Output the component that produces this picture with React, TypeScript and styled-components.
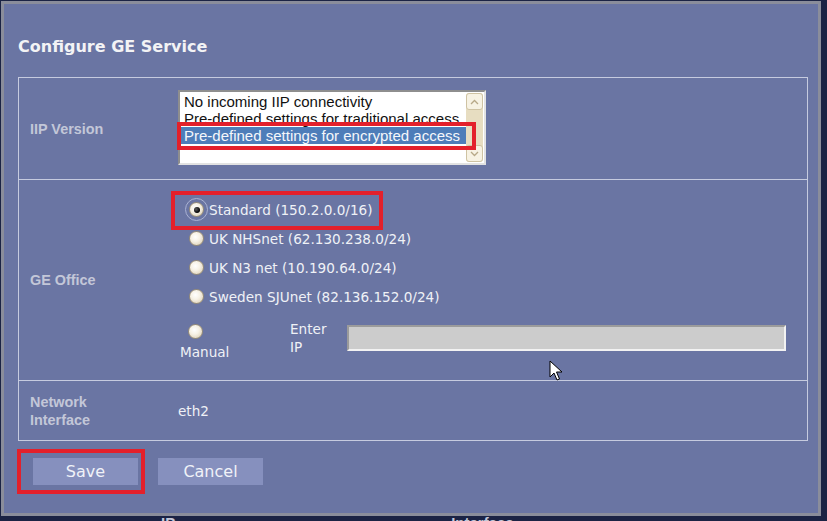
import React from "react";
import styled, { createGlobalStyle } from "styled-components";

const GlobalStyle = createGlobalStyle`
  html, body {
    margin: 0;
    padding: 0;
    background: #1b2344;
  }
  body {
    width: 827px;
    height: 521px;
    overflow: hidden;
    font-family: "DejaVu Sans", "Liberation Sans", sans-serif;
  }
`;

const Page = styled.div`
  width: 827px;
  height: 521px;
  box-sizing: border-box;
  padding: 1px 0 0 1px;
  background: #1b2344;
  overflow: hidden;
`;

const Dialog = styled.div`
  width: 820px;
  height: 515px;
  box-sizing: border-box;
  border: 3px solid #8a8d9b;
  background: #6a75a3;
  padding: 33px 10px 0 14px;
  display: flex;
  flex-direction: column;
`;

const Title = styled.h1`
  margin: 0 0 20px;
  font-family: "DejaVu Sans", sans-serif;
  font-weight: bold;
  font-size: 16px;
  line-height: 20px;
  color: #f3f3f5;
`;

const Table = styled.div`
  border: 1px solid #c6cbdf;
  display: flex;
  flex-direction: column;
`;

const Row = styled.div<{ $h: number; $last?: boolean }>`
  display: grid;
  grid-template-columns: 159px 1fr;
  height: ${(p) => p.$h}px;
  border-bottom: ${(p) => (p.$last ? "none" : "1px solid #c6cbdf")};
`;

const Label = styled.div`
  align-self: center;
  padding-left: 11px;
  font-family: "Liberation Sans", Arial, sans-serif;
  font-weight: bold;
  font-size: 14.4px;
  line-height: 18px;
  color: #c3c7d8;
`;

const Cell = styled.div<{ $pt?: number; $center?: boolean }>`
  padding-top: ${(p) => p.$pt ?? 0}px;
  display: flex;
  flex-direction: column;
  justify-content: ${(p) => (p.$center ? "center" : "flex-start")};
`;

const ListWrap = styled.div`
  position: relative;
  width: 308px;
  height: 75px;
`;

const ListBox = styled.div`
  width: 100%;
  height: 100%;
  box-sizing: border-box;
  border: 2px solid;
  border-color: #8e8e8e #e2e2e2 #e2e2e2 #8e8e8e;
  background: #ffffff;
  display: flex;
`;

const Options = styled.div`
  flex: 1;
  overflow: hidden;
  padding-top: 1px;
`;

const Option = styled.div<{ $selected?: boolean }>`
  height: 17px;
  line-height: 17px;
  padding-left: 4px;
  white-space: nowrap;
  font-family: "Liberation Sans", Arial, sans-serif;
  font-size: 15px;
  color: ${(p) => (p.$selected ? "#f5f7fb" : "#111111")};
  background: ${(p) => (p.$selected ? "#4e7db9" : "transparent")};
`;

const ScrollBar = styled.div`
  width: 17px;
  margin: 1px 1px 1px 0;
  background: #e7ddc1;
  border-radius: 3px;
  display: flex;
  flex-direction: column;
  justify-content: space-between;
`;

const ScrollBtn = styled.div`
  height: 17px;
  box-sizing: border-box;
  border: 1px solid #cfc3a3;
  border-radius: 3px;
  background: #f7f2e3;
  display: flex;
  align-items: center;
  justify-content: center;
`;

const Annotation = styled.div<{ $l: number; $t: number; $w: number; $h: number }>`
  position: absolute;
  left: ${(p) => p.$l}px;
  top: ${(p) => p.$t}px;
  width: ${(p) => p.$w}px;
  height: ${(p) => p.$h}px;
  box-sizing: border-box;
  border: 4px solid #e3202b;
  pointer-events: none;
`;

const RadioList = styled.div`
  padding-left: 10px;
  display: flex;
  flex-direction: column;
`;

const RadioRow = styled.label`
  position: relative;
  height: 29px;
  display: flex;
  align-items: center;
  font-size: 13.6px;
  color: #eff1f6;
  white-space: nowrap;
`;

const Radio = styled.span<{ $checked?: boolean; $focus?: boolean; $ml?: number }>`
  position: relative;
  width: 15px;
  height: 15px;
  margin-left: ${(p) => p.$ml ?? 1}px;
  margin-right: 5px;
  flex: none;
  border-radius: 50%;
  box-sizing: border-box;
  border: 1px solid #9a8f78;
  background: radial-gradient(circle at 42% 38%, #ffffff 0%, #f7f2e6 40%, #d6c8ab 100%);
  outline: ${(p) => (p.$focus ? "1px solid #aab2d3" : "none")};
  outline-offset: 3px;
  &::after {
    content: "";
    display: ${(p) => (p.$checked ? "block" : "none")};
    position: absolute;
    left: 3.5px;
    top: 3.5px;
    width: 6px;
    height: 6px;
    border-radius: 50%;
    background: radial-gradient(circle at 35% 35%, #5a5a5a 0%, #000 70%);
  }
`;

const ManualRow = styled.div`
  position: relative;
  height: 68px;
  display: flex;
  align-items: flex-start;
  padding-left: 2px;
`;

const ManualCol = styled.div`
  width: 110px;
  padding-top: 13px;
  display: flex;
  flex-direction: column;
  align-items: flex-start;
  gap: 5px;
  font-size: 13.6px;
  line-height: 17px;
  color: #eff1f6;
`;

const EnterLabel = styled.div`
  width: 57px;
  margin-top: 9px;
  font-size: 13.6px;
  line-height: 18px;
  color: #eff1f6;
`;

const IpInput = styled.input`
  width: 439px;
  height: 26px;
  margin: 14px 0 0;
  box-sizing: border-box;
  border: 2px solid;
  border-color: #9b9b9b #f2f2f2 #f2f2f2 #9b9b9b;
  background: #cccccc;
  padding: 0 4px;
  font-family: "DejaVu Sans", sans-serif;
  font-size: 14px;
`;

const Cursor = styled.svg`
  position: absolute;
  left: 371px;
  top: 49px;
`;

const Value = styled.div`
  font-size: 13.6px;
  line-height: 18px;
  color: #eff1f6;
`;

const Buttons = styled.div`
  display: flex;
  gap: 20px;
  margin: 17px 0 0 15px;
`;

const BtnWrap = styled.div`
  position: relative;
`;

const Button = styled.button`
  width: 105px;
  height: 27px;
  border: none;
  padding: 0;
  background: #8690be;
  color: #f0f2f8;
  font-family: "DejaVu Sans", sans-serif;
  font-size: 16px;
  line-height: 27px;
  cursor: pointer;
`;

const Behind = styled.div`
  height: 5px;
  overflow: hidden;
  display: flex;
  font-family: "Liberation Sans", Arial, sans-serif;
  font-weight: bold;
  font-size: 15px;
  line-height: 15px;
  color: #c3c7d8;
`;

const BehindText = styled.span<{ $ml: number }>`
  margin-left: ${(p) => p.$ml}px;
  margin-top: -1px;
`;

const Chevron = ({ up }: { up?: boolean }) => (
  <svg width="9" height="6" viewBox="0 0 9 6">
    <path
      d={up ? "M1 5 L4.5 1.5 L8 5" : "M1 1 L4.5 4.5 L8 1"}
      fill="none"
      stroke="#b7a887"
      strokeWidth="1.3"
    />
  </svg>
);

export default function App() {
  return (
    <>
      <GlobalStyle />
      <Page>
        <Dialog>
          <Title>Configure GE Service</Title>
          <Table>
            <Row $h={101}>
              <Label>IIP Version</Label>
              <Cell $pt={12}>
                <ListWrap>
                  <ListBox>
                    <Options>
                      <Option>No incoming IIP connectivity</Option>
                      <Option>Pre-defined settings for traditional access</Option>
                      <Option $selected>Pre-defined settings for encrypted access</Option>
                    </Options>
                    <ScrollBar>
                      <ScrollBtn>
                        <Chevron up />
                      </ScrollBtn>
                      <ScrollBtn>
                        <Chevron />
                      </ScrollBtn>
                    </ScrollBar>
                  </ListBox>
                  <Annotation $l={-1} $t={32} $w={299} $h={28} />
                </ListWrap>
              </Cell>
            </Row>
            <Row $h={200}>
              <Label>GE Office</Label>
              <Cell $pt={15}>
                <RadioList>
                  <RadioRow>
                    <Radio $checked $focus />
                    Standard (150.2.0.0/16)
                    <Annotation $l={-17} $t={-4} $w={212} $h={39} />
                  </RadioRow>
                  <RadioRow>
                    <Radio />
                    UK NHSnet (62.130.238.0/24)
                  </RadioRow>
                  <RadioRow>
                    <Radio />
                    UK N3 net (10.190.64.0/24)
                  </RadioRow>
                  <RadioRow>
                    <Radio />
                    Sweden SJUnet (82.136.152.0/24)
                  </RadioRow>
                </RadioList>
                <ManualRow>
                  <ManualCol>
                    <Radio $ml={8} />
                    Manual
                  </ManualCol>
                  <EnterLabel>
                    Enter
                    <br />
                    IP
                  </EnterLabel>
                  <IpInput type="text" />
                  <Cursor width="14" height="22" viewBox="0 0 14 22">
                    <path
                      d="M1 1 L1 17 L5 13 L8 20 L10.5 19 L7.5 12 L13 12 Z"
                      fill="#ffffff"
                      stroke="#000000"
                      strokeWidth="1"
                      strokeLinejoin="round"
                    />
                  </Cursor>
                </ManualRow>
              </Cell>
            </Row>
            <Row $h={59} $last>
              <Label>
                Network
                <br />
                Interface
              </Label>
              <Cell $center>
                <Value>eth2</Value>
              </Cell>
            </Row>
          </Table>
          <Buttons>
            <BtnWrap>
              <Button>Save</Button>
              <Annotation $l={-16} $t={-9} $w={128} $h={45} />
            </BtnWrap>
            <BtnWrap>
              <Button>Cancel</Button>
            </BtnWrap>
          </Buttons>
        </Dialog>
        <Behind>
          <BehindText $ml={160}>IP</BehindText>
          <BehindText $ml={276}>Interface</BehindText>
        </Behind>
      </Page>
    </>
  );
}
